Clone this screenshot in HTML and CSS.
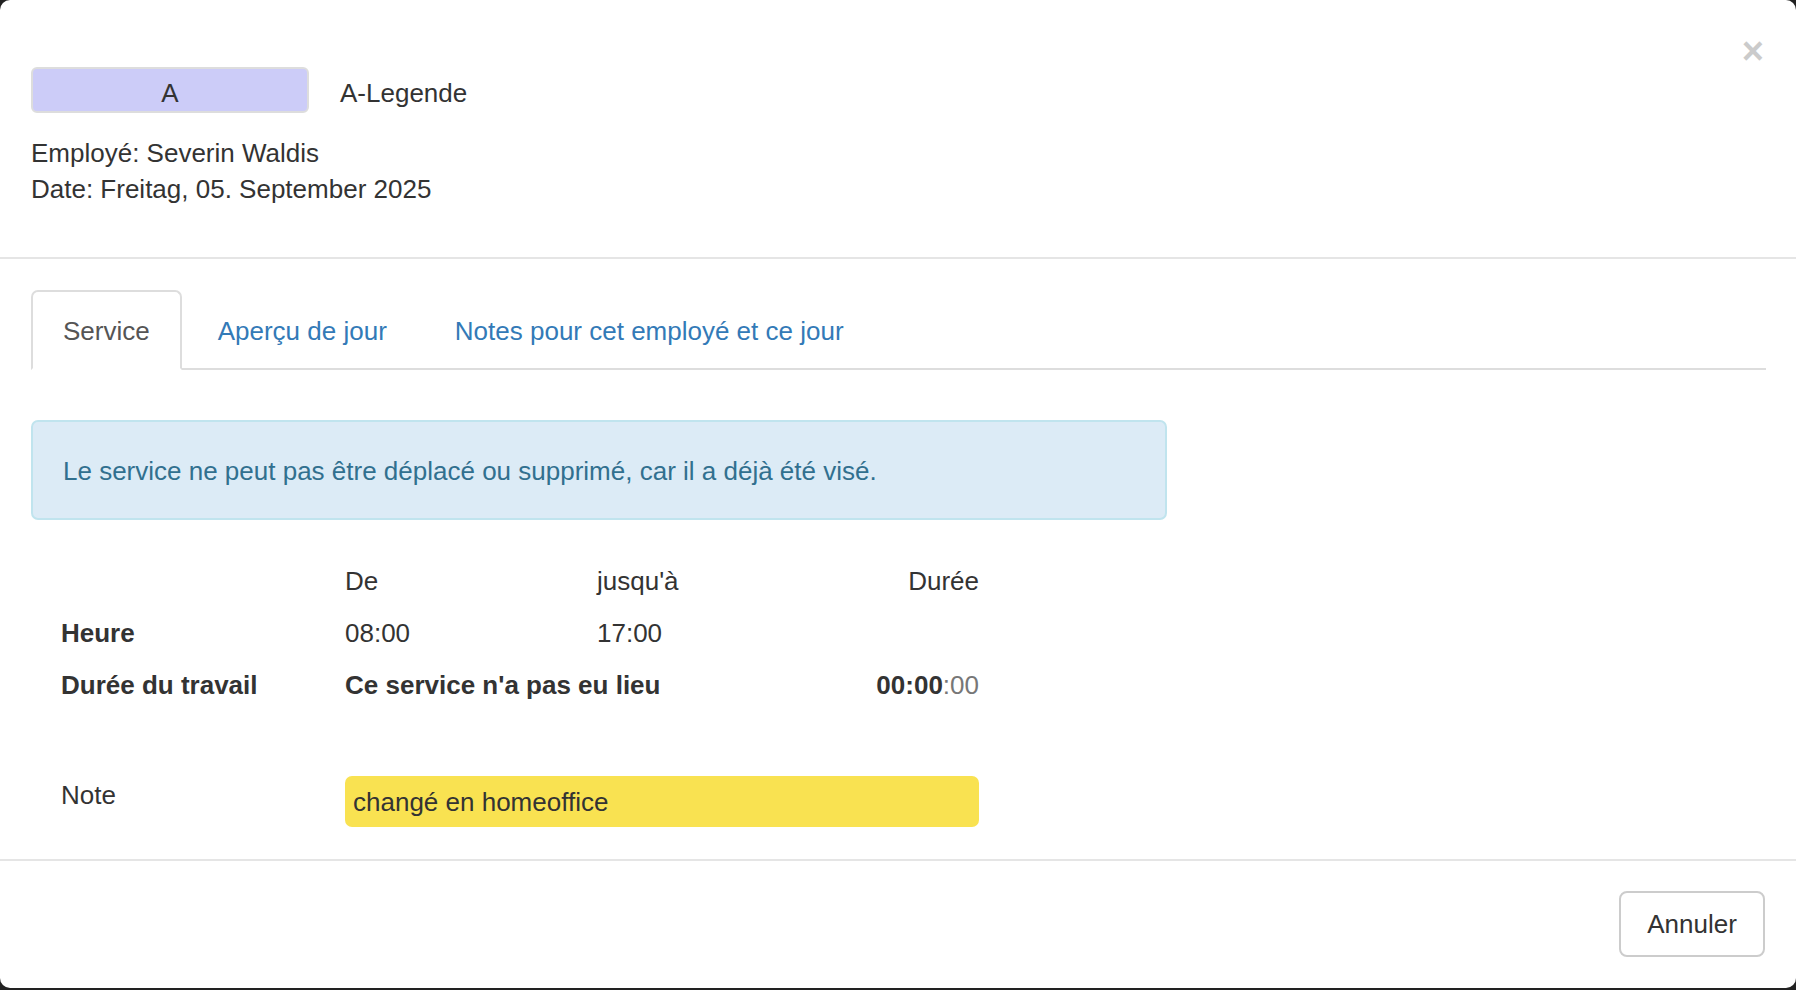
FILE: index.html
```html
<!DOCTYPE html>
<html lang="fr">
<head>
    <meta charset="UTF-8">
    <meta name="viewport" content="width=device-width, initial-scale=1.0">
    <title>Service</title>
    <link rel="stylesheet" href="styles.css">
</head>
<body>
    <div class="modal">
        <!-- En-tête -->
        <div class="modal-header">
            <span class="close">&times;</span>
            <div class="legend-row">
                <div class="legend-box">A</div>
                <div class="legend-label">A-Legende</div>
            </div>
            <div class="info">
                <div>Employé: Severin Waldis</div>
                <div>Date: Freitag, 05. September 2025</div>
            </div>
        </div>

        <!-- Contenu -->
        <div class="modal-body">
            <ul class="tabs">
                <li class="tab active">Service</li>
                <li class="tab"><a href="#">Aperçu de jour</a></li>
                <li class="tab"><a href="#">Notes pour cet employé et ce jour</a></li>
            </ul>

            <div class="alert">Le service ne peut pas être déplacé ou supprimé, car il a déjà été visé.</div>

            <div class="times">
                <div></div>
                <div>De</div>
                <div>jusqu'à</div>
                <div class="right">Durée</div>

                <div class="bold">Heure</div>
                <div>08:00</div>
                <div>17:00</div>
                <div></div>

                <div class="bold">Durée du travail</div>
                <div class="bold span2">Ce service n'a pas eu lieu</div>
                <div class="right"><b>00:00</b><span class="muted">:00</span></div>
            </div>

            <div class="note-row">
                <div class="note-label">Note</div>
                <div class="note-value">changé en homeoffice</div>
            </div>
        </div>

        <!-- Pied -->
        <div class="modal-footer">
            <button class="btn">Annuler</button>
        </div>
    </div>
</body>
</html>
```

FILE: styles.css
```css
body {
    margin: 0;
    background-color: #222;
    font-family: "Liberation Sans", Arial, sans-serif;
    font-size: 26px;
    line-height: 36px;
    color: #333;
}
.modal {
    height: 988px;
    background-color: #fff;
    border-radius: 10px;
    overflow: hidden;
}
.modal-header {
    position: relative;
    padding: 67px 31px 51px;
    border-bottom: 2px solid #e5e5e5;
}
.close {
    position: absolute;
    top: 29px;
    right: 32px;
    font-size: 38px;
    font-weight: bold;
    line-height: 44px;
    color: #000;
    opacity: 0.2;
}
.legend-row {
    display: flex;
    align-items: center;
}
.legend-box {
    width: 274px;
    height: 37px;
    padding-top: 5px;
    line-height: 38px;
    text-align: center;
    background-color: #ccccf8;
    border: 2px solid #ddd;
    border-radius: 6px;
}
.legend-label {
    margin-left: 31px;
    padding-top: 6px;
}
.info {
    margin-top: 21px;
}
.info div {
    padding-top: 1px;
    height: 35px;
}
.modal-body {
    padding: 31px 30px 32px 31px;
}
.tabs {
    list-style: none;
    margin: 0;
    padding: 0;
    display: flex;
    border-bottom: 2px solid #ddd;
}
.tab {
    padding: 21px 30px 19px;
    margin-right: 4px;
    margin-bottom: -2px;
    border: 2px solid transparent;
    border-radius: 7px 7px 0 0;
}
.tab a {
    color: #337ab7;
    text-decoration: none;
}
.tab.active {
    color: #555;
    background-color: #fff;
    border-color: #ddd #ddd transparent;
}
.alert {
    width: 1072px;
    margin-top: 50px;
    padding: 31px 30px 29px;
    background-color: #dcebf6;
    border: 2px solid #c0e4ee;
    border-radius: 7px;
    color: #31708f;
}
.times {
    display: grid;
    grid-template-columns: 284px 252px 191px 191px;
    grid-auto-rows: 52px;
    align-items: center;
    margin-top: 34px;
    padding-left: 30px;
}
.times div {
    padding-top: 2px;
}
.right {
    text-align: right;
}
.bold {
    font-weight: bold;
}
.span2 {
    grid-column: span 2;
}
.muted {
    color: #777;
}
.note-row {
    display: grid;
    grid-template-columns: 284px 634px;
    margin-top: 66px;
    padding-left: 30px;
}
.note-label {
    padding-top: 1px;
}
.note-value {
    height: 51px;
    line-height: 52px;
    padding: 0 8px;
    background-color: #f9e251;
    border-radius: 7px;
}
.modal-footer {
    display: flex;
    justify-content: flex-end;
    padding: 30px 31px 30px;
    border-top: 2px solid #e5e5e5;
}
.btn {
    width: 146px;
    height: 66px;
    padding-top: 2px;
    font-family: inherit;
    font-size: 26px;
    color: #333;
    background-color: #fff;
    border: 2px solid #ccc;
    border-radius: 8px;
}
```
